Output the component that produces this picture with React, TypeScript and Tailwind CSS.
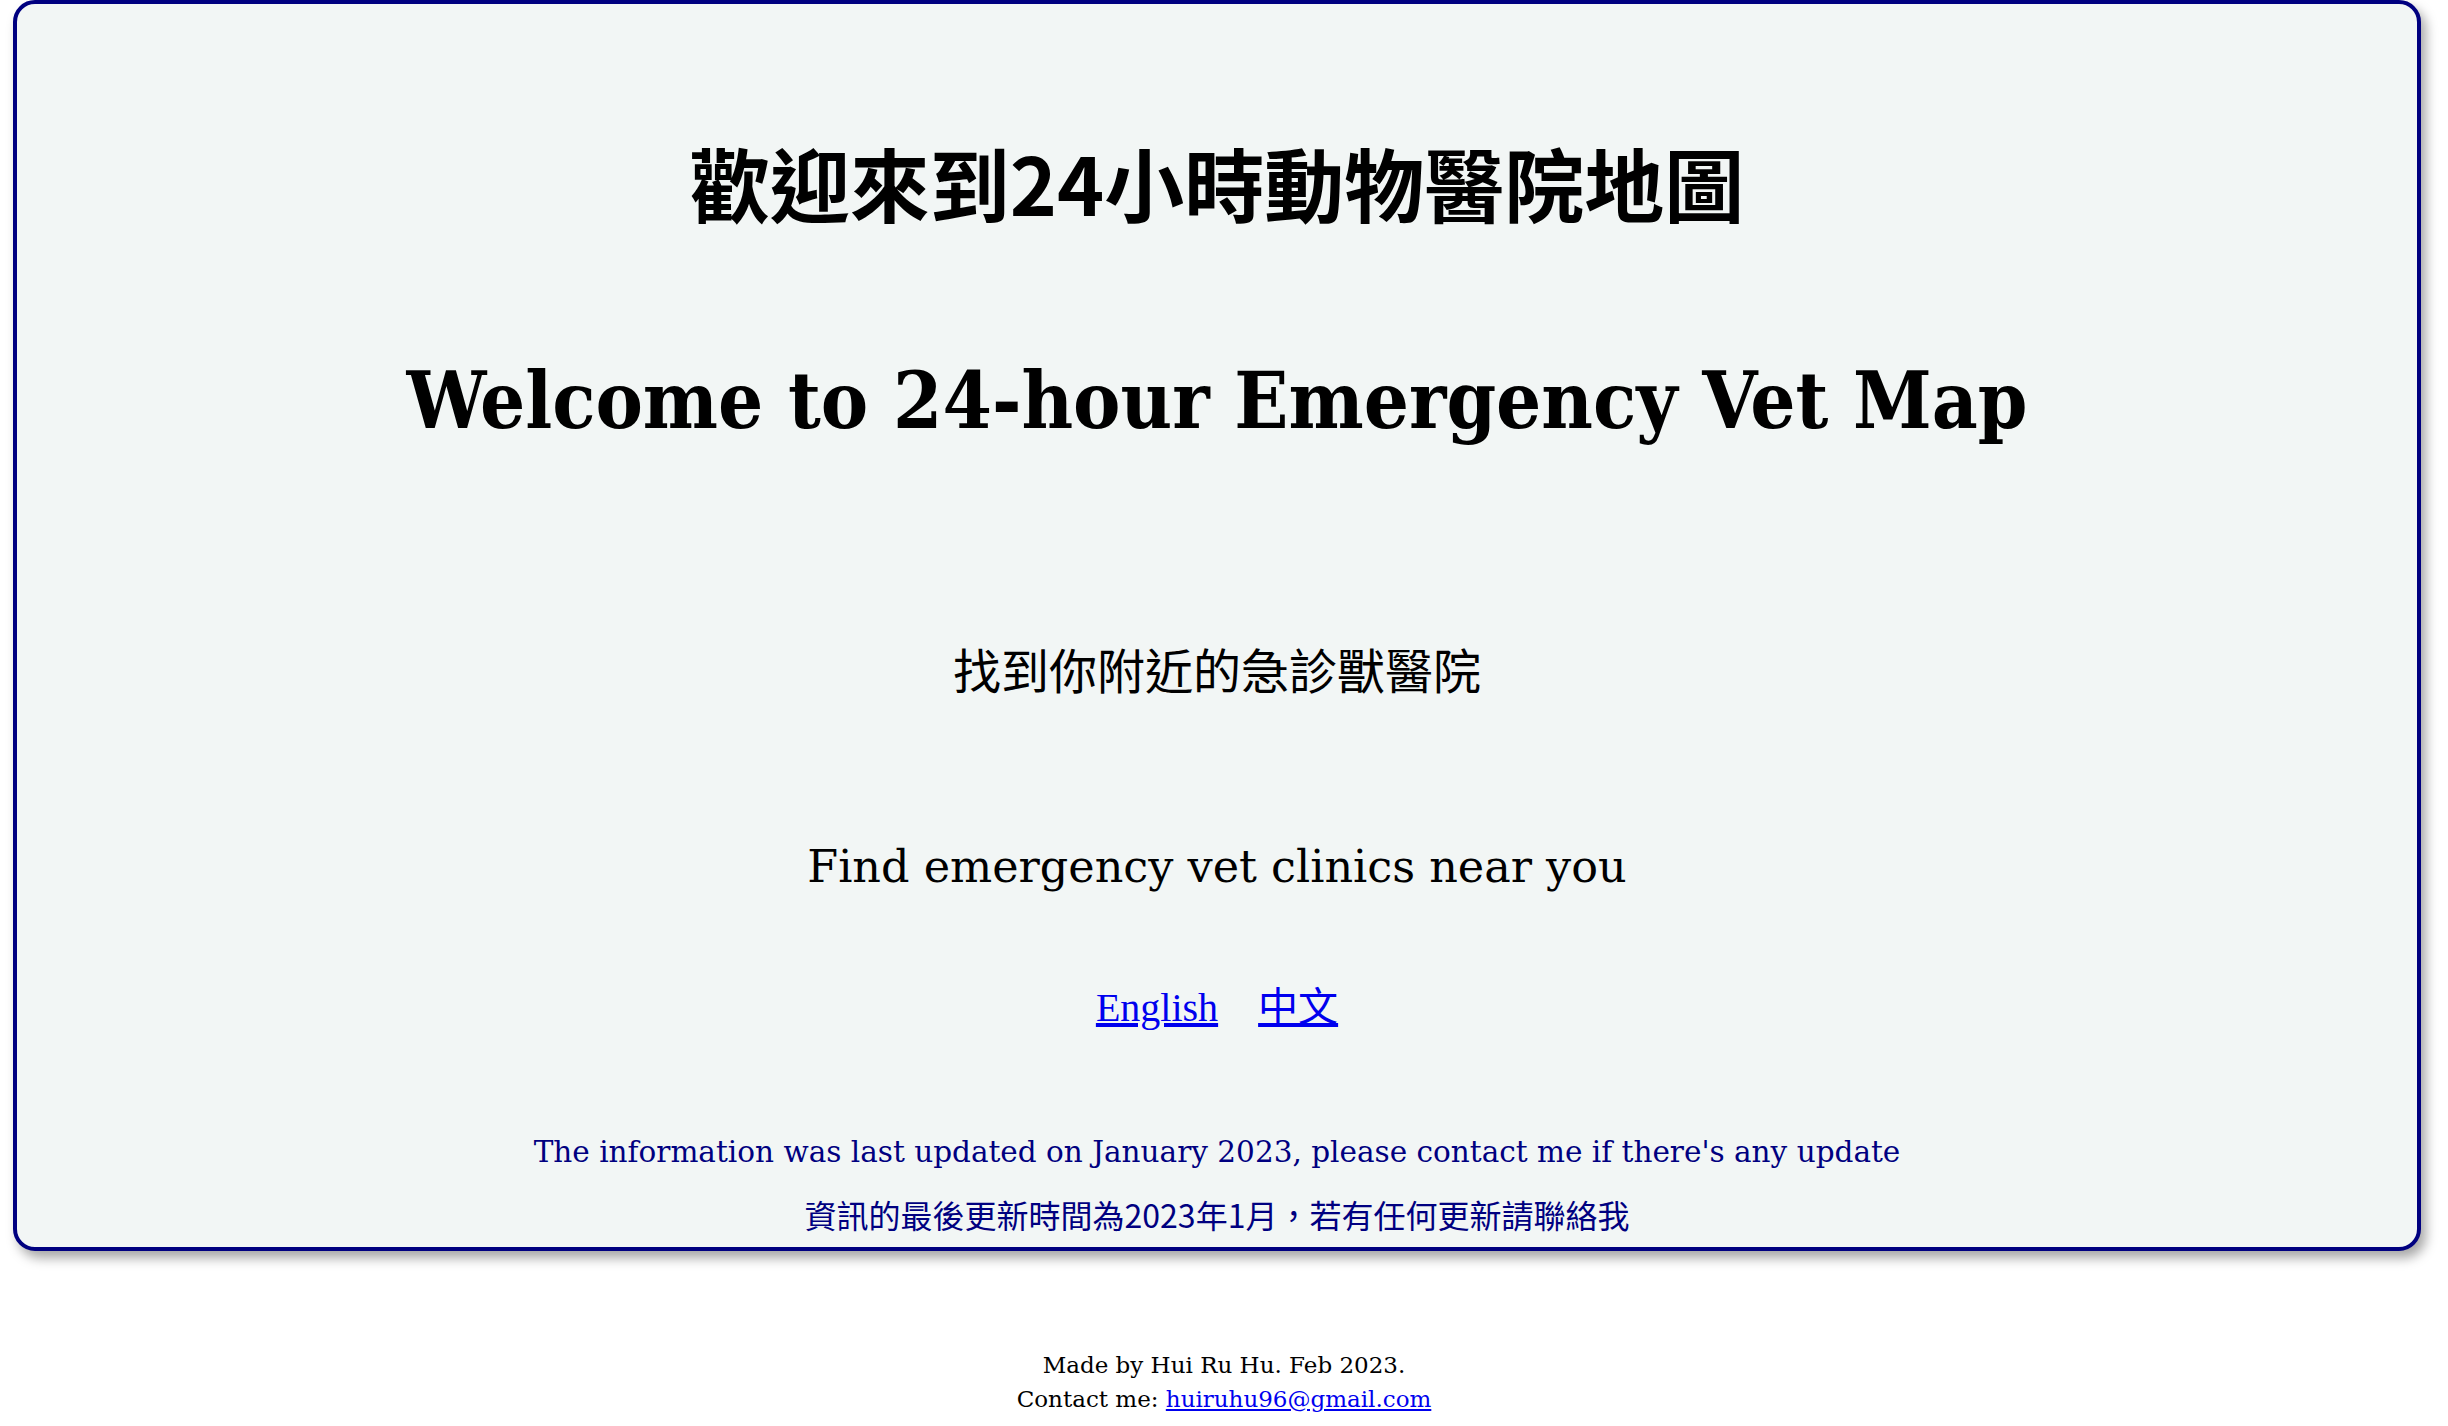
const slab = "font-['DejaVu_Serif','Noto_Sans_CJK_TC',serif]"

const App = () => {
  return (
    <div className="min-h-screen bg-white pt-0">
      {/* card */}
      <div className="ml-[13px] w-[2408px] h-[1251px] border-4 border-[#000080] rounded-[22px] bg-[#f2f6f5] shadow-[5px_7px_12px_rgba(0,0,0,0.35)] flex flex-col items-center text-center text-black">
        <h1 className="mt-[137px] text-[80px] leading-[80px] font-bold font-['Noto_Sans_CJK_TC',sans-serif]">
          歡迎來到24小時動物醫院地圖
        </h1>
        <h1 className="mt-[136px] text-[79px] leading-[88px] font-bold font-stretch-condensed font-['DejaVu_Serif_Condensed','DejaVu_Serif',serif]">
          Welcome to 24-hour Emergency Vet Map
        </h1>
        <p className="mt-[199px] text-[48px] leading-[48px] font-['Noto_Sans_CJK_TC',sans-serif]">
          找到你附近的急診獸醫院
        </p>
        <p className={`mt-[153px] text-[44.5px] leading-[44px] ${slab}`}>
          Find emergency vet clinics near you
        </p>
        <div className="mt-[99px] flex gap-[40px] text-[40px] leading-[40px] font-['Liberation_Serif','Noto_Sans_CJK_TC',serif] text-[#0000ee]">
          <a href="#" className="underline">English</a>
          <a href="#" className="underline">中文</a>
        </div>
        <p className={`mt-[108px] text-[29.5px] leading-[32px] text-[#000080] ${slab}`}>
          The information was last updated on January 2023, please contact me if there's any update
        </p>
        <p className="mt-[30px] text-[32px] leading-[32px] text-[#000080] font-['Noto_Sans_CJK_TC',sans-serif]">
          資訊的最後更新時間為2023年1月，若有任何更新請聯絡我
        </p>
      </div>
      {/* footer */}
      <footer className={`mt-[97px] text-center text-[23px] leading-[34px] text-black ${slab}`}>
        <div>Made by Hui Ru Hu. Feb 2023.</div>
        <div>
          Contact me: <a href="#" className="underline text-[#0000ee]">huiruhu96@gmail.com</a>
        </div>
      </footer>
    </div>
  )
}

export default App
